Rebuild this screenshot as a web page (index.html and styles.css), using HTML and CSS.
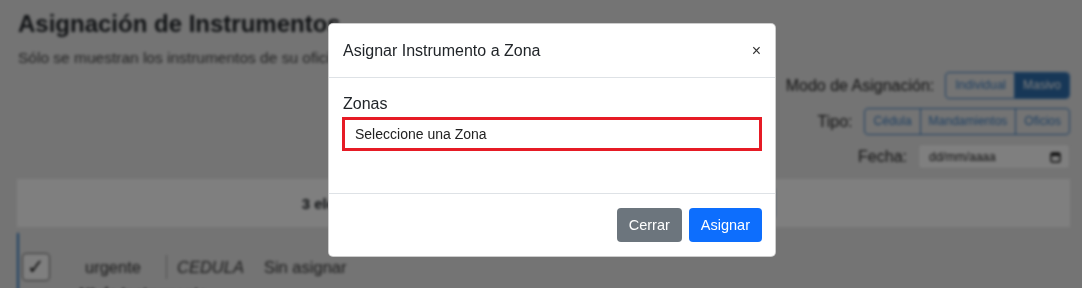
FILE: index.html
```html
<!DOCTYPE html>
<html lang="es">
<head>
<meta charset="utf-8">
<title>Asignación de Instrumentos</title>
<link rel="stylesheet" href="styles.css">
</head>
<body>
<div class="page">
  <div class="top">
    <h1 class="title">Asignación de Instrumentos</h1>
    <p class="subtitle">Sólo se muestran los instrumentos de su oficina asignada</p>
  </div>
  <div class="filters">
    <div class="frow">
      <span class="flabel">Modo de Asignación:</span>
      <div class="bgroup">
        <span class="gbtn">Individual</span><span class="gbtn active">Masivo</span>
      </div>
    </div>
    <div class="frow">
      <span class="flabel">Tipo:</span>
      <div class="bgroup">
        <span class="gbtn">Cédula</span><span class="gbtn">Mandamientos</span><span class="gbtn">Oficios</span>
      </div>
    </div>
    <div class="frow">
      <span class="flabel">Fecha:</span>
      <div class="dateinput">
        <span>dd/mm/aaaa</span>
        <svg width="11" height="12" viewBox="0 0 11 12"><rect x="1" y="2" width="9" height="9" rx="1.5" fill="none" stroke="#222" stroke-width="1.5"/><rect x="1" y="2" width="9" height="3" fill="#222"/></svg>
      </div>
    </div>
  </div>
  <div class="card">
    <div class="card-head">
      <span class="count">3 elementos seleccionados</span>
      <span class="hbtn">Asignar Zona</span>
    </div>
    <div class="row">
      <span class="check">&#10003;</span>
      <span class="cell urg">urgente</span>
      <span class="sep"></span>
      <span class="cell type">CEDULA</span>
      <span class="cell">Sin asignar</span>
    </div>
    <div class="row2">Nº de Instrumento</div>
  </div>
</div>
<div class="backdrop"></div>
<div class="modal">
  <div class="modal-header">
    <span class="modal-title">Asignar Instrumento a Zona</span>
    <span class="close">&times;</span>
  </div>
  <div class="modal-body">
    <label class="label">Zonas</label>
    <div class="select">Seleccione una Zona</div>
  </div>
  <div class="modal-footer">
    <span class="btn gray">Cerrar</span>
    <span class="btn blue">Asignar</span>
  </div>
</div>
</body>
</html>
```
FILE: styles.css
```css
html, body {
  margin: 0;
  height: 100%;
  overflow: hidden;
}
body {
  font-family: "Liberation Sans", Arial, sans-serif;
  background: #e9e9e9;
  color: #212529;
}
.page {
  filter: blur(1.4px);
  padding: 10px 12px 0 18px;
}
.title {
  margin: 0;
  font-size: 24px;
  line-height: 27px;
  font-weight: bold;
}
.subtitle {
  margin: 11px 0 0;
  font-size: 15.5px;
  line-height: 19px;
  color: #444;
}
.filters {
  display: flex;
  flex-direction: column;
  align-items: flex-end;
  gap: 9px;
  margin-top: 5px;
}
.frow {
  display: flex;
  align-items: center;
  gap: 11px;
}
.flabel {
  font-size: 16px;
  color: #222;
}
.bgroup {
  display: flex;
  border: 1px solid #3b7fc4;
  border-radius: 4px;
  overflow: hidden;
}
.gbtn {
  font-size: 12px;
  color: #3b7fc4;
  padding: 0 8px;
  height: 25px;
  line-height: 25px;
  border-left: 1px solid #3b7fc4;
}
.gbtn:first-child { border-left: none; padding-left: 9px; }
.gbtn.active {
  background: #2f6fae;
  color: #fff;
  padding: 0 8px;
}
.dateinput {
  width: 152px;
  height: 25px;
  background: #fff;
  border: 1px solid #ddd;
  border-radius: 3px;
  display: flex;
  align-items: center;
  justify-content: space-between;
  padding: 0 8px 0 10px;
  box-sizing: border-box;
  font-size: 12px;
  color: #222;
}
.card {
  margin-top: 10px;
  margin-left: -1px;
}
.card-head {
  height: 48px;
  background: #ffffff;
  display: flex;
  align-items: center;
  justify-content: center;
  font-size: 15px;
}
.count { font-weight: bold; margin-left: -10px; }
.hbtn {
  border: 1px solid #3b7fc4;
  border-radius: 5px;
  height: 32px;
  line-height: 32px;
  padding: 0 14px;
  color: #3b7fc4;
  margin-left: 160px;
}
.row {
  margin-top: 6px;
  border-left: 2px solid #2f7ac6;
  display: flex;
  align-items: center;
  padding: 20px 0 0 3px;
  font-size: 16.5px;
  color: #333;
}
.check {
  width: 26px;
  height: 26px;
  border: 1px solid #666;
  border-radius: 4px;
  background: #fff;
  display: flex;
  align-items: center;
  justify-content: center;
  font-size: 21px;
  color: #111;
}
.cell { padding: 0 10px; }
.urg { margin-left: 25px; width: 68px; }
.sep {
  width: 1px;
  height: 24px;
  background: #999;
  margin: 0 0 0 3px;
}
.type { font-style: italic; }
.row2 {
  border-left: 2px solid #2f7ac6;
  padding: 3px 0 0 60px;
  font-size: 15px;
  font-weight: bold;
  color: #333;
}
.backdrop {
  position: fixed;
  inset: 0;
  background: rgba(0, 0, 0, 0.5);
}
.modal {
  position: fixed;
  left: 328px;
  top: 23px;
  width: 448px;
  background: #fff;
  border: 1px solid rgba(0, 0, 0, 0.2);
  border-radius: 5px;
  box-sizing: border-box;
  color: #212529;
}
.modal-header {
  display: flex;
  align-items: center;
  justify-content: space-between;
  padding: 16px 14px 15px 14px;
  border-bottom: 1px solid #dee2e6;
  height: 54px;
  box-sizing: border-box;
}
.modal-title {
  font-size: 16px;
  line-height: 22px;
}
.close {
  font-size: 16px;
  color: #333;
  line-height: 1;
}
.modal-body {
  padding: 15px 13px 42px;
}
.label {
  display: block;
  font-size: 16px;
  line-height: 22px;
  margin-bottom: 2px;
  margin-left: 1px;
}
.select {
  height: 34px;
  border: 3px solid #e61b25;
  box-sizing: border-box;
  padding: 0 10px;
  font-size: 14px;
  line-height: 28px;
  color: #222;
}
.modal-footer {
  border-top: 1px solid #dee2e6;
  display: flex;
  justify-content: flex-end;
  gap: 7px;
  padding: 14px 13px 14px;
}
.btn {
  height: 34px;
  line-height: 34px;
  border-radius: 4px;
  color: #fff;
  font-size: 14.5px;
  padding: 0 12px;
}
.gray { background: #6c757d; }
.blue { background: #0d6efd; }
```
